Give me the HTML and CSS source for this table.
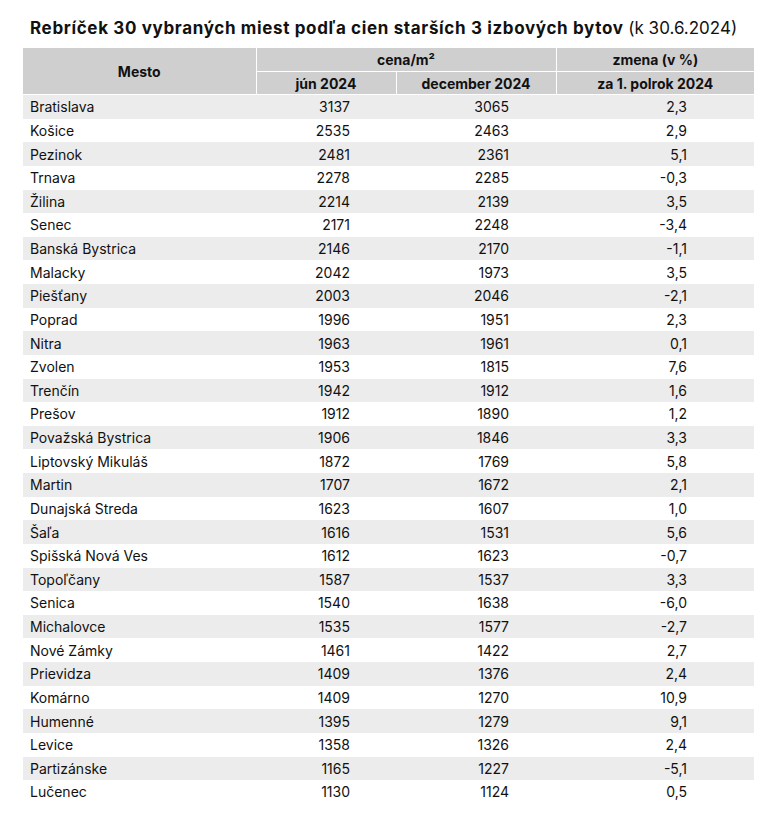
FILE: index.html
```html
<!DOCTYPE html>
<html lang="sk">
<head>
<meta charset="utf-8">
<link rel="stylesheet" href="styles.css">
</head>
<body>
<div class="page">
  <h1 class="title"><strong>Rebríček 30 vybraných miest podľa cien starších 3 izbových bytov</strong> (k 30.6.2024)</h1>
  <table class="tbl">
    <colgroup>
      <col class="c1"><col class="c2"><col class="c3"><col class="c4">
    </colgroup>
    <thead>
      <tr class="h1">
        <th rowspan="2">Mesto</th>
        <th colspan="2">cena/m²</th>
        <th>zmena (v %)</th>
      </tr>
      <tr class="h2">
        <th>jún 2024</th>
        <th>december 2024</th>
        <th>za 1. polrok 2024</th>
      </tr>
    </thead>
    <tbody>
      <tr><td>Bratislava</td><td class="n2">3137</td><td class="n3">3065</td><td class="n4">2,3</td></tr>
      <tr><td>Košice</td><td class="n2">2535</td><td class="n3">2463</td><td class="n4">2,9</td></tr>
      <tr><td>Pezinok</td><td class="n2">2481</td><td class="n3">2361</td><td class="n4">5,1</td></tr>
      <tr><td>Trnava</td><td class="n2">2278</td><td class="n3">2285</td><td class="n4">-0,3</td></tr>
      <tr><td>Žilina</td><td class="n2">2214</td><td class="n3">2139</td><td class="n4">3,5</td></tr>
      <tr><td>Senec</td><td class="n2">2171</td><td class="n3">2248</td><td class="n4">-3,4</td></tr>
      <tr><td>Banská Bystrica</td><td class="n2">2146</td><td class="n3">2170</td><td class="n4">-1,1</td></tr>
      <tr><td>Malacky</td><td class="n2">2042</td><td class="n3">1973</td><td class="n4">3,5</td></tr>
      <tr><td>Piešťany</td><td class="n2">2003</td><td class="n3">2046</td><td class="n4">-2,1</td></tr>
      <tr><td>Poprad</td><td class="n2">1996</td><td class="n3">1951</td><td class="n4">2,3</td></tr>
      <tr><td>Nitra</td><td class="n2">1963</td><td class="n3">1961</td><td class="n4">0,1</td></tr>
      <tr><td>Zvolen</td><td class="n2">1953</td><td class="n3">1815</td><td class="n4">7,6</td></tr>
      <tr><td>Trenčín</td><td class="n2">1942</td><td class="n3">1912</td><td class="n4">1,6</td></tr>
      <tr><td>Prešov</td><td class="n2">1912</td><td class="n3">1890</td><td class="n4">1,2</td></tr>
      <tr><td>Považská Bystrica</td><td class="n2">1906</td><td class="n3">1846</td><td class="n4">3,3</td></tr>
      <tr><td>Liptovský Mikuláš</td><td class="n2">1872</td><td class="n3">1769</td><td class="n4">5,8</td></tr>
      <tr><td>Martin</td><td class="n2">1707</td><td class="n3">1672</td><td class="n4">2,1</td></tr>
      <tr><td>Dunajská Streda</td><td class="n2">1623</td><td class="n3">1607</td><td class="n4">1,0</td></tr>
      <tr><td>Šaľa</td><td class="n2">1616</td><td class="n3">1531</td><td class="n4">5,6</td></tr>
      <tr><td>Spišská Nová Ves</td><td class="n2">1612</td><td class="n3">1623</td><td class="n4">-0,7</td></tr>
      <tr><td>Topoľčany</td><td class="n2">1587</td><td class="n3">1537</td><td class="n4">3,3</td></tr>
      <tr><td>Senica</td><td class="n2">1540</td><td class="n3">1638</td><td class="n4">-6,0</td></tr>
      <tr><td>Michalovce</td><td class="n2">1535</td><td class="n3">1577</td><td class="n4">-2,7</td></tr>
      <tr><td>Nové Zámky</td><td class="n2">1461</td><td class="n3">1422</td><td class="n4">2,7</td></tr>
      <tr><td>Prievidza</td><td class="n2">1409</td><td class="n3">1376</td><td class="n4">2,4</td></tr>
      <tr><td>Komárno</td><td class="n2">1409</td><td class="n3">1270</td><td class="n4">10,9</td></tr>
      <tr><td>Humenné</td><td class="n2">1395</td><td class="n3">1279</td><td class="n4">9,1</td></tr>
      <tr><td>Levice</td><td class="n2">1358</td><td class="n3">1326</td><td class="n4">2,4</td></tr>
      <tr><td>Partizánske</td><td class="n2">1165</td><td class="n3">1227</td><td class="n4">-5,1</td></tr>
      <tr><td>Lučenec</td><td class="n2">1130</td><td class="n3">1124</td><td class="n4">0,5</td></tr>
    </tbody>
  </table>
</div>
</body>
</html>
```

FILE: styles.css
```css
html, body {
  margin: 0;
  padding: 0;
  background: #ffffff;
}
.page {
  padding: 18px 0 0 23px;
  font-family: "Inter", "Liberation Sans", sans-serif;
  color: #111111;
}
.title {
  margin: 0 0 10px 7px;
  font-size: 17px;
  line-height: 20px;
  font-weight: 400;
  color: #111;
  white-space: nowrap;
}
.title strong {
  font-weight: 700;
  letter-spacing: 0.65px;
}
.tbl {
  border-collapse: collapse;
  table-layout: fixed;
  width: 731px;
  font-size: 14px;
}
.c1 { width: 233px; }
.c2 { width: 140px; }
.c3 { width: 160px; }
.c4 { width: 198px; }
.tbl th {
  background: #cfcfcf;
  font-weight: 700;
  text-align: center;
  padding: 0;
  border: 1px solid #ffffff;
  color: #111;
}
.tbl thead tr:first-child th { border-top: none; }
.tbl th:first-child { border-left: none; }
.tbl th:last-child { border-right: none; }
.h1 th { height: 23px; }
.h2 th { height: 22px; }
.tbl td {
  height: 23.63px;
  padding: 0;
  white-space: nowrap;
}
.tbl td:first-child { padding-left: 7px; }
.tbl tbody tr:nth-child(odd) td { background: #ececec; }
.n2, .n3, .n4 { text-align: right; }
.n2 { padding-right: 46px !important; }
.n3 { padding-right: 47px !important; }
.n4 { padding-right: 67px !important; }
```
